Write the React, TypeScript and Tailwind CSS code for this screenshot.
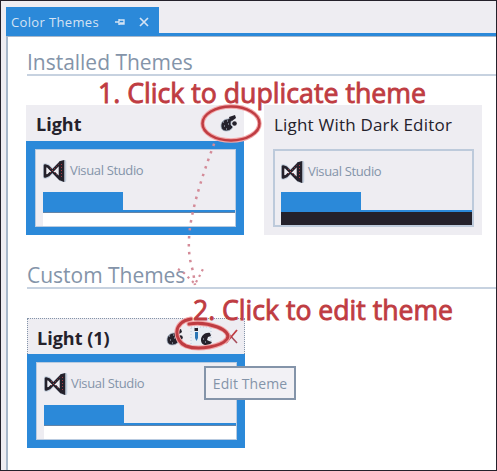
import React from "react";

function StudioLogo() {
  return (
    <svg width="24" height="22" viewBox="0 0 24 22" fill="none" className="shrink-0">
      <path d="M2 5.500v11l3-1L18 3l3-1v18l-3-1L5 6.500Z" stroke="#c3cedc" strokeWidth="4.500" strokeLinejoin="round" />
      <path d="M2 5.500v11l3.500-1.500L17 3v16L5 6.500Z" fill="#eeedf2" stroke="#24212b" strokeWidth="2.600" strokeLinejoin="round" />
      <path d="M17 2 20.500 1v20L17 19.500Z" fill="#24212b" stroke="#24212b" strokeWidth="1.500" />
      <path d="m7 13 9-9M7 8l8 8M18.500 4v15" stroke="#c6404a" strokeWidth="0.8" strokeDasharray="1 2" />
    </svg>
  );
}

function PaletteIcon() {
  return (
    <svg width="18" height="18" viewBox="0 0 18 18" className="shrink-0">
      <path d="M8 5C4 5 1 8 1 12c0 3 2 5 5 5 3 0 5-1 7-4l-2-2 0-3 1-2-2-2Z" fill="#24212b" stroke="#a9b7c8" strokeWidth=".8" />
      <path d="m9 3 3-1 3-1 1 3-4 3-2-1Z" fill="#24212b" />
      <circle cx="14.500" cy="9.500" r="2.300" fill="#24212b" />
      <path d="M3 8h1M7 7h1M4 12h1M8 10h1M6 15h1" stroke="#bdcadb" strokeWidth="1" />
    </svg>
  );
}

function EditIcon() {
  return (
    <svg width="26" height="24" viewBox="0 0 26 24" className="shrink-0">
      <path d="M2 2h20v20H2z" stroke="#bdcadb" strokeWidth="1" strokeDasharray="1 2" fill="#e7edf4" />
      <path d="M5.500 3H9v3H5.500z" fill="#24212b" />
      <path d="M6 7h3v6l-1.500 3L6 13z" fill="#2b76b5" />
      <path d="M21 8c-5-1-9 3-9 7 0 3 2 5 5 5 3 0 5-1 6-3l-3-1-2-1 1-3 3-1Z" fill="#24212b" />
      <path d="M14 14h1M16 17h1" stroke="#bdcadb" />
    </svg>
  );
}

function Preview({ selected, dark }: { selected: boolean; dark?: boolean }) {
  return (
    <div className={`h-[94px] px-[9px] pt-2 ${selected ? "bg-[#2b89d9]" : ""}`}>
      <div className={`flex h-[78px] w-[201px] flex-col bg-[#eeedf2] ${selected ? "border border-[#b9cbe0] pl-[7px]" : "border-2 border-[#bdcadb] pl-[6px]"}`}>
        <div className={`flex shrink-0 items-center ${selected ? "h-[42px]" : "h-[41px]"}`}>
          <StudioLogo />
          <span className="ml-[3px] whitespace-nowrap font-['Open_Sans',sans-serif] text-[13px] tracking-[-0.35px] text-[#8494a9]">Visual Studio</span>
        </div>
        <div className="h-[18px] w-20 shrink-0 bg-[#2b89d9]" />
        <div className={`shrink-0 bg-[#2b89d9] ${dark ? "h-[2px]" : "h-[3px] border-b border-[#6484a7]"}`} />
        <div className={`flex-1 ${dark ? "bg-[#24212b]" : "bg-white"}`} />
      </div>
    </div>
  );
}

function ThemeCard({ name, selected = false, dark = false, focused = false, children }: { name: string; selected?: boolean; dark?: boolean; focused?: boolean; children?: React.ReactNode }) {
  return (
    <section className="h-[130px] w-[218px] shrink-0 bg-[#eeedf2]">
      <header className={`flex h-9 items-center justify-between pr-[6px] ${focused ? "border-x border-t border-dotted border-[#8494a9] pl-[9px]" : "pl-[10px]"}`}>
        <h3 className={`whitespace-nowrap pt-[3px] font-['Open_Sans',sans-serif] text-[#24212b] ${selected ? "text-[18px] font-bold" : "text-[17px] font-normal tracking-[0.2px]"}`}>{name}</h3>
        <div className="flex items-center">{children}</div>
      </header>
      <Preview selected={selected} dark={dark} />
    </section>
  );
}

function Heading({ children }: { children: React.ReactNode }) {
  return (
    <h2 className="ml-[19px] h-[30px] whitespace-nowrap border-b-2 border-[#c7d2e0] pt-px font-['Open_Sans',sans-serif] text-[21px] leading-[31px] tracking-[-0.02px] text-[#8494a9]">
      {children}
    </h2>
  );
}

function Annotations() {
  const label = "font-['Open_Sans',sans-serif] text-[28px] font-normal";
  return (
    <svg className="pointer-events-none absolute -left-px -top-px" width="497" height="471" viewBox="0 0 497 471" fill="none">
      <path d="M217 136 Q190 207 189 239 Q188 256 193 271L195 285" stroke="#d48b98" strokeWidth="2.500" strokeDasharray="2.500 5.500" />
      <path d="m178 269 6 4 6 6 5 5 4-7 4-8" stroke="#d48b98" strokeWidth="2.200" strokeDasharray="2.200 4" />
      <ellipse cx="231" cy="123.500" rx="28.500" ry="17" stroke="#f2a7a9" strokeWidth="4.500" />
      <ellipse cx="231" cy="123.500" rx="28.500" ry="17" stroke="#bf3c42" strokeWidth="2.500" />
      <path d="M191 319c-19 3-17 22-5 27 13 5 36 0 41-7 6-9-19-18-38-15" stroke="#f2a7a9" strokeWidth="5" strokeLinecap="round" />
      <path d="M191 319c-19 3-17 22-5 27 13 5 36 0 41-7 6-9-19-18-38-15" stroke="#bf3c42" strokeWidth="3" strokeLinecap="round" />
      <g fill="#bf3c42" stroke="#bf3c42" strokeWidth="0.9" className={label}>
        <text x="98" y="103" textLength="328" lengthAdjust="spacingAndGlyphs">1. Click to duplicate theme</text>
        <text x="193" y="320" textLength="260" lengthAdjust="spacingAndGlyphs">2. Click to edit theme</text>
      </g>
    </svg>
  );
}

export default function App() {
  return (
    <main className="relative flex h-[471px] w-[497px] flex-col overflow-hidden border border-[#24212b] bg-[#eeedf2] pl-[5px] pt-[6px]">
      <div className="flex h-[26px] w-[153px] shrink-0 items-center bg-[#2b89d9] pl-[5px] pt-[4px] text-[#d4e3f4]">
        <span className="w-[103px] whitespace-nowrap pt-[2px] font-['Open_Sans',sans-serif] text-[13px] tracking-[0.35px]">Color Themes</span>
        <svg width="12" height="10" viewBox="0 0 12 10" fill="none" stroke="currentColor" className="shrink-0">
          <path d="M1 5h4M5 2v6M5 3h5v4H5M6 6h4" strokeWidth="1.400" />
        </svg>
        <svg width="10" height="10" viewBox="0 0 10 10" fill="none" stroke="currentColor" className="ml-[13px] shrink-0">
          <path d="m1 1 8 8M9 1 1 9" strokeWidth="1.700" />
        </svg>
      </div>
      <div className="h-[3px] shrink-0 bg-[#2b89d9]" />
      <div className="flex-1 border-l-2 border-t border-[#a7b7ca] bg-white pt-[9px]">
        <Heading>Installed Themes</Heading>
        <div className="ml-[18px] mt-[29px] flex gap-5">
          <ThemeCard name="Light" selected><PaletteIcon /></ThemeCard>
          <ThemeCard name="Light With Dark Editor" dark />
        </div>
        <div className="mt-[24px]"><Heading>Custom Themes</Heading></div>
        <div className="ml-[19px] mt-[29px]">
          <ThemeCard name="Light (1)" selected focused>
            <PaletteIcon />
            <div className="ml-[5px]"><EditIcon /></div>
            <svg width="14" height="16" viewBox="0 0 14 16" fill="none" className="ml-[9px]">
              <path d="m2 2 11 12" stroke="#a64b59" strokeWidth="1.600" />
              <path d="M13 1 2 14" stroke="#bf3c42" strokeWidth="1.800" />
            </svg>
          </ThemeCard>
        </div>
      </div>
      <Annotations />
      <div className="absolute left-[203px] top-[365px] flex h-[34px] w-[92px] items-center justify-center whitespace-nowrap border-2 border-[#8494a9] bg-[#f2f1f5] pt-px font-['Open_Sans',sans-serif] text-[14px] tracking-[0.1px] text-[#8494a9]">Edit Theme</div>
    </main>
  );
}
